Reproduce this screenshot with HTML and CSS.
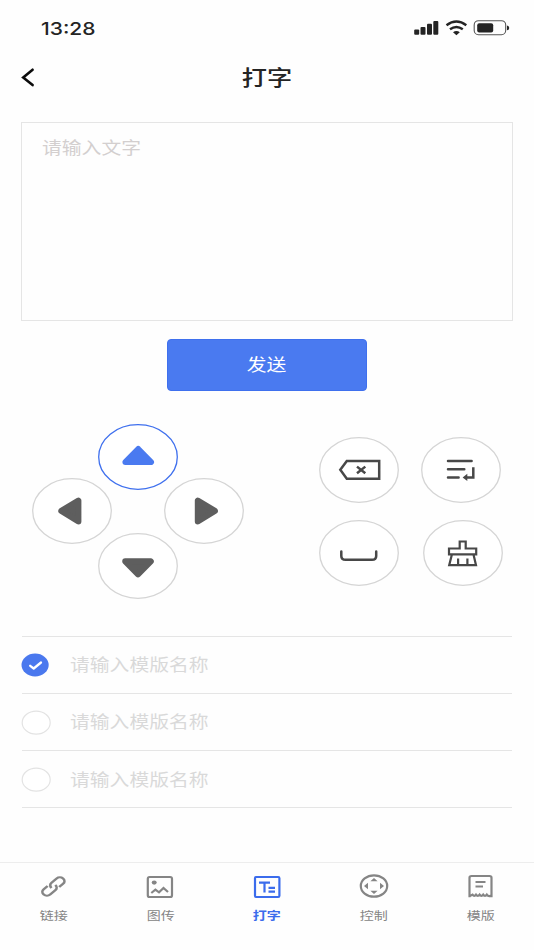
FILE: index.html
```html
<!DOCTYPE html>
<html lang="zh-CN">
<head>
<meta charset="utf-8">
<title>打字</title>
<link rel="stylesheet" href="styles.css">
</head>
<body>
<div class="screen">
  <div class="status">
    <span class="time wide">13:28</span>
    <svg class="status-icons" width="98" height="20" viewBox="0 0 98 20">
      <g fill="#242424">
        <rect x="1.2" y="11.5" width="5" height="5.3" rx="1"/>
        <rect x="7.5" y="9" width="5" height="7.8" rx="1"/>
        <rect x="14" y="5.8" width="5" height="11" rx="1"/>
        <rect x="20.3" y="3" width="5" height="13.8" rx="1"/>
        <path d="M40 14.200Q43.400 12 46.800 14.200L43.400 17.300Z"/>
        <rect x="64.200" y="5.200" width="16" height="9.200" rx="2"/>
        <path d="M94 7.500q2.200.3 2.200 2.400t-2.200 2.400z"/>
      </g>
      <g fill="none" stroke="#242424" stroke-width="2.400">
        <path d="M33.500 7.200Q43.400-.2 53.300 7.200M37 11.300Q43.400 6.600 49.800 11.300"/>
        <rect x="61.200" y="2.700" width="31.500" height="14" rx="4.200" stroke="#555" stroke-width="1.100"/>
      </g>
    </svg>
  </div>
  <header class="header">
    <svg class="back" width="14" height="20" viewBox="0 0 14 20"><path d="M11.600 2.700 2.200 10.400l9.400 7.700" fill="none" stroke="#0c0c0c" stroke-width="2.600" stroke-linecap="round"/></svg>
    <h1 class="title wide">打字</h1>
    <span class="header-end"></span>
  </header>
  <div class="editor"><span class="placeholder wide">请输入文字</span></div>
  <button class="send"><span class="wide">发送</span></button>

  <div class="controls">
    <div class="dpad">
      <svg class="key up active" viewBox="0 0 80 66"><ellipse cx="40" cy="33" rx="39.300" ry="32.300"/><path class="arrow" d="M40.200 25 53 38H27.400Z"/></svg>
      <svg class="key left" viewBox="0 0 80 66"><ellipse cx="40" cy="33" rx="39.300" ry="32.300"/><path class="arrow" d="M29.300 32.900 46.400 22.600V43.400Z"/></svg>
      <svg class="key right" viewBox="0 0 80 66"><ellipse cx="40" cy="33" rx="39.300" ry="32.300"/><path class="arrow" d="M50.900 32.900 33.800 22.600V43.400Z"/></svg>
      <svg class="key down" viewBox="0 0 80 66"><ellipse cx="40" cy="33" rx="39.300" ry="32.300"/><path class="arrow" d="M40 41.300 52.800 28.300H27.200Z"/></svg>
    </div>
    <div class="edit-keys">
      <div class="key-row top">
        <svg class="key" viewBox="0 0 80 66"><ellipse cx="40" cy="33" rx="39.300" ry="32.300"/><path class="glyph" d="M27.800 23.900H60.200V41.700H27.800L21.300 32.800Z"/><path class="glyph" d="M38 29.600 46.300 36.300M46.300 29.600 38 36.300"/></svg>
        <svg class="key" viewBox="0 0 80 66"><ellipse cx="40" cy="33" rx="39.300" ry="32.300"/><path class="glyph round" d="M27 24.100H50.600M27 32.300H43.300M27 40.400H37.600"/><path class="glyph" d="M52.300 30.200V40.400H44.300"/><path class="solid" d="M41.600 40.400 46.300 36.700V44Z"/></svg>
      </div>
      <div class="key-row bottom">
        <svg class="key" viewBox="0 0 80 66"><ellipse cx="40" cy="33" rx="39.300" ry="32.300"/><path class="glyph round" d="M22.300 31.600V36Q22.300 39.800 26.600 39.800H53Q57.200 39.800 57.200 36V31.600"/></svg>
        <svg class="key" viewBox="0 0 80 66"><ellipse cx="40" cy="33" rx="39.300" ry="32.300"/><path class="glyph thin" d="M36.700 28.500V21.500H42.700V28.500H53.200V34.300H26V28.500ZM28.900 34.500 26.200 45.200H53L50.500 34.500M35.100 38.500V45M44.400 38.500V45"/></svg>
      </div>
    </div>
  </div>

  <ul class="templates">
    <li><svg class="check" width="28" height="24" viewBox="0 0 28 24"><ellipse cx="13.100" cy="12" rx="13.600" ry="11.400" fill="#4a78ee"/><path d="M8.200 12.800 11.700 15.500 19 9.500" fill="none" stroke="#fff" stroke-width="2.300" stroke-linecap="round" stroke-linejoin="round"/></svg><span class="wide">请输入模版名称</span></li>
    <li><svg class="check" width="28" height="24" viewBox="0 0 28 24"><ellipse class="empty" cx="14.200" cy="12.700" rx="14" ry="11.500"/></svg><span class="wide">请输入模版名称</span></li>
    <li><svg class="check" width="28" height="24" viewBox="0 0 28 24"><ellipse class="empty" cx="14.200" cy="12.700" rx="14" ry="11.500"/></svg><span class="wide">请输入模版名称</span></li>
  </ul>

  <nav class="tabs">
    <a class="tab">
      <svg viewBox="0 0 30 26"><path transform="translate(15.400 12.500) scale(1.200 1) rotate(-45)" d="M-3 -3.800H-7.600A3.800 3.800 0 0 0-7.600 3.800H-1.600A3.800 3.800 0 0 0 2.200 0M3 3.800H7.600A3.800 3.800 0 0 0 7.600-3.800H1.600A3.800 3.800 0 0 0-2.200 0"/></svg>
      <span class="wide">链接</span>
    </a>
    <a class="tab">
      <svg viewBox="0 0 30 26"><rect x="2.800" y="3" width="24.200" height="20" rx="1.800"/><ellipse cx="9.200" cy="8.600" rx="2.500" ry="2.100" class="fill"/><path d="M6.300 19 10.400 15.700 14 18.300 18.500 14 23 18"/></svg>
      <span class="wide">图传</span>
    </a>
    <a class="tab current">
      <svg viewBox="0 0 30 26"><rect x="3" y="3" width="24.400" height="20" rx="1.200"/><path d="M7 8.700H18M12.500 8.700V18.500M16.500 13.900H23M16.500 17.700H23"/></svg>
      <span class="wide">打字</span>
    </a>
    <a class="tab">
      <svg viewBox="0 0 30 26"><ellipse cx="15" cy="12" rx="13.200" ry="10.700"/><path class="fill" d="M15 4 18.600 7.200H11.400ZM15 20 18.600 16.800H11.400ZM5 12 9 8.800V15.200ZM25 12 21 8.800V15.200Z"/></svg>
      <span class="wide">控制</span>
    </a>
    <a class="tab">
      <svg viewBox="0 0 30 26"><path d="M3.500 23.200V3.700Q3.500 2 5.500 2H23.500Q25.500 2 25.500 3.700V23.200M3.500 22.200 6.500 20.600Q8.200 23.200 10 20.600Q11.800 23.200 13.600 20.600Q15.400 23.200 17.200 20.600Q19 23.200 20.800 20.600Q22.500 23.200 25.500 21.500"/><path d="M9.500 8H19.500M9.500 12.500H17"/></svg>
      <span class="wide">模版</span>
    </a>
  </nav>
</div>
</body>
</html>
```
FILE: styles.css
```css
* { box-sizing: border-box; }

body {
  margin: 0;
  background: #fefefe;
  color: #242424;
  font-family: "Noto Sans CJK SC", sans-serif;
}

.screen {
  display: flex;
  flex-direction: column;
  width: 534px;
  height: 950px;
  overflow: hidden;
}

.wide {
  display: inline-block;
  transform: scaleX(1.2);
  transform-origin: left center;
  white-space: nowrap;
}

.status {
  display: flex;
  justify-content: space-between;
  align-items: center;
  height: 56px;
  padding: 0 22.700px 0 40.500px;
}

.time {
  padding-top: 2px;
  font: 500 17.500px/24px Inter, sans-serif;
}

.header {
  display: flex;
  justify-content: space-between;
  align-items: center;
  height: 42px;
  padding: 0 21px;
}

.header-end { width: 14px; }

.title {
  margin: -2px 0 0;
  font-size: 21px;
  line-height: 32px;
  font-weight: 500;
  transform-origin: center;
}

.editor {
  height: 199px;
  margin: 24px 21.500px 0 21px;
  padding: 11px 20px;
  border: 1.500px solid #e5e5e5;
}

.placeholder {
  color: #d3cfcf;
  font-size: 16.500px;
  line-height: 26px;
}

.send {
  align-self: center;
  width: 200px;
  height: 52px;
  margin-top: 17.500px;
  padding: 0 1px 2px 0;
  border: 1px solid #3f70ee;
  border-radius: 4px;
  background: #4a7af0;
  color: #fff;
  font: 400 16.500px/26px "Noto Sans CJK SC", sans-serif;
}

.send .wide { transform-origin: center; }

.controls {
  display: flex;
  justify-content: space-between;
  height: 245px;
  padding: 39px 31px 0 39px;
}

.dpad {
  display: grid;
  grid-template-columns: repeat(3, 66px);
  grid-template-rows: repeat(3, 54.500px);
  place-items: center;
}

.key {
  flex: none;
  width: 80px;
  height: 66px;
}

.key ellipse { fill: #fff; stroke: #d5d5d5; stroke-width: 1.300; }
.up { grid-area: 1 / 2; }
.left { grid-area: 2 / 1; }
.right { grid-area: 2 / 3; }
.down { grid-area: 3 / 2; }

.arrow { fill: #5e5e5e; stroke: #5e5e5e; stroke-width: 6; stroke-linejoin: round; }
.active ellipse { stroke: #3f70ee; }
.active .arrow { fill: #4a7af0; stroke: #4a7af0; }
.glyph { fill: none; stroke: #484848; stroke-width: 2.500; }
.glyph.thin { stroke-width: 2.200; }
.round { stroke-linecap: round; }
.solid { fill: #484848; }

.edit-keys {
  display: flex;
  flex-direction: column;
  gap: 17px;
  width: 184px;
  padding-top: 7px;
}

.key-row { display: flex; justify-content: space-between; }
.key-row.top { padding: 0 2px 0 0; }

.templates {
  margin: 0 22px;
  padding: 0;
  list-style: none;
  border-top: 1px solid #e5e5e5;
}

.templates li {
  display: flex;
  align-items: center;
  gap: 20px;
  height: 57.300px;
  border-bottom: 1px solid #e5e5e5;
  color: #d9d9d9;
  font-size: 16.500px;
  line-height: 26px;
}

.templates .wide { margin-top: -1px; }

.check { overflow: visible; }
.empty { fill: #fff; stroke: #e3e3e3; stroke-width: 1.200; }

.tabs {
  display: flex;
  height: 88px;
  margin-top: auto;
  padding-top: 11px;
  border-top: 1px solid #ededed;
}

.tab {
  flex: 1;
  display: flex;
  flex-direction: column;
  align-items: center;
  gap: 6px;
  color: #858585;
  font-size: 11.700px;
  line-height: 18px;
}

.tab .wide { transform-origin: center; }
.tab svg { width: 30px; height: 26px; fill: none; stroke: currentColor; stroke-width: 2.200; }
.tab .fill { fill: currentColor; stroke: none; }
.current { color: #3b6cec; font-weight: 700; }
```
